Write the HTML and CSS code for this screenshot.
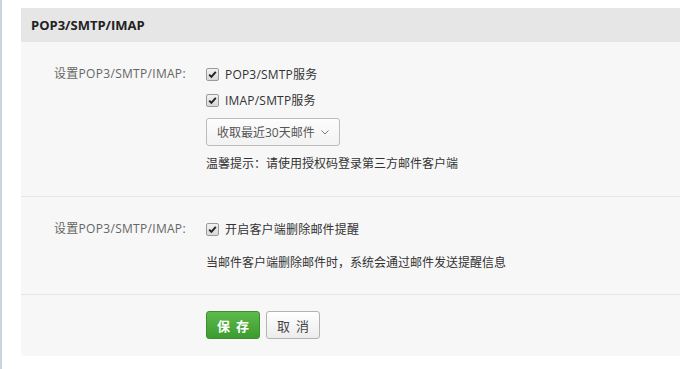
FILE: index.html
```html
<!DOCTYPE html>
<html lang="zh">
<head>
<meta charset="utf-8">
<link rel="stylesheet" href="styles.css">
</head>
<body>
<div class="frame">
  <div class="panel">
    <div class="panel-head">POP3/SMTP/IMAP</div>
    <div class="section s1">
      <div class="label">设置POP3/SMTP/IMAP:</div>
      <div class="controls">
        <div class="check-row"><span class="cb"><svg viewBox="0 0 11 11" width="11" height="11"><path d="M2.2 5.6 L4.4 7.9 L8.8 2.8" fill="none" stroke="#222" stroke-width="1.9"/></svg></span>POP3/SMTP服务</div>
        <div class="check-row"><span class="cb"><svg viewBox="0 0 11 11" width="11" height="11"><path d="M2.2 5.6 L4.4 7.9 L8.8 2.8" fill="none" stroke="#222" stroke-width="1.9"/></svg></span>IMAP/SMTP服务</div>
        <div class="select">收取最近30天邮件<svg class="chev" viewBox="0 0 8 5" width="8" height="5"><path d="M0.5 0.5 L4 4 L7.5 0.5" fill="none" stroke="#777" stroke-width="1"/></svg></div>
        <div class="hint h1">温馨提示：请使用授权码登录第三方邮件客户端</div>
      </div>
    </div>
    <div class="section s2">
      <div class="label">设置POP3/SMTP/IMAP:</div>
      <div class="controls">
        <div class="check-row"><span class="cb"><svg viewBox="0 0 11 11" width="11" height="11"><path d="M2.2 5.6 L4.4 7.9 L8.8 2.8" fill="none" stroke="#222" stroke-width="1.9"/></svg></span>开启客户端删除邮件提醒</div>
        <div class="hint h2">当邮件客户端删除邮件时，系统会通过邮件发送提醒信息</div>
      </div>
    </div>
    <div class="section s3">
      <div class="label"></div>
      <div class="controls buttons">
        <button class="btn btn-save">保 存</button>
        <button class="btn btn-cancel">取 消</button>
      </div>
    </div>
  </div>
</div>
</body>
</html>
```

FILE: styles.css
```css
html, body {
  margin: 0;
  padding: 0;
  background: #fff;
}
body {
  font-family: "Open Sans", "Noto Sans CJK SC", sans-serif;
  font-size: 12px;
  color: #333;
}
.frame {
  border-left: 2px solid #c9d5df;
  height: 369px;
  box-sizing: border-box;
  padding: 8px 0 0 19px;
}
.panel {
  background: #f7f7f7;
  border-radius: 0 0 0 3px;
}
.panel-head {
  height: 34px;
  line-height: 34px;
  background: #e6e6e6;
  padding-left: 10px;
  font-weight: bold;
  font-size: 13px;
  color: #222;
}
.section {
  display: grid;
  grid-template-columns: 185px 1fr;
}
.section + .section {
  border-top: 1px solid #e6e6e6;
}
.s1 { padding: 19px 0 22px; }
.s2 { padding: 19px 0 21px; }
.s3 { padding: 16px 0 17px; }
.label {
  padding-left: 33px;
  line-height: 26px;
  color: #666;
  letter-spacing: 0.3px;
}
.check-row {
  display: flex;
  align-items: center;
  height: 26px;
  color: #333;
  letter-spacing: 0.2px;
}
.cb {
  width: 11px;
  height: 11px;
  border: 1px solid #9a9a9a;
  border-radius: 2px;
  background: linear-gradient(#f2f2f2, #d8d8d8);
  margin-right: 6px;
  display: flex;
}
.select {
  display: inline-flex;
  align-items: center;
  height: 28px;
  box-sizing: border-box;
  margin-top: 5px;
  padding: 0 10px;
  border: 1px solid #bcbcbc;
  border-radius: 3px;
  background: linear-gradient(#fdfdfd, #f2f2f2);
  color: #555;
}
.chev {
  margin-left: 6px;
}
.controls {
  display: flex;
  flex-direction: column;
  align-items: flex-start;
}
.hint {
  line-height: 20px;
  color: #333;
}
.h1 { margin-top: 8px; }
.h2 { margin-top: 11px; }
.buttons {
  flex-direction: row;
  gap: 6px;
}
.btn {
  width: 54px;
  height: 28px;
  border-radius: 3px;
  font-family: "Noto Sans CJK SC", sans-serif;
  font-size: 13px;
  word-spacing: 3px;
  padding: 0;
  cursor: pointer;
}
.btn-save {
  background: linear-gradient(#5dba4b, #3d9c2f);
  border: 1px solid #3a902c;
  color: #fff;
  font-weight: bold;
}
.btn-cancel {
  background: linear-gradient(#ffffff, #ececec);
  border: 1px solid #b3b3b3;
  color: #444;
}
```
